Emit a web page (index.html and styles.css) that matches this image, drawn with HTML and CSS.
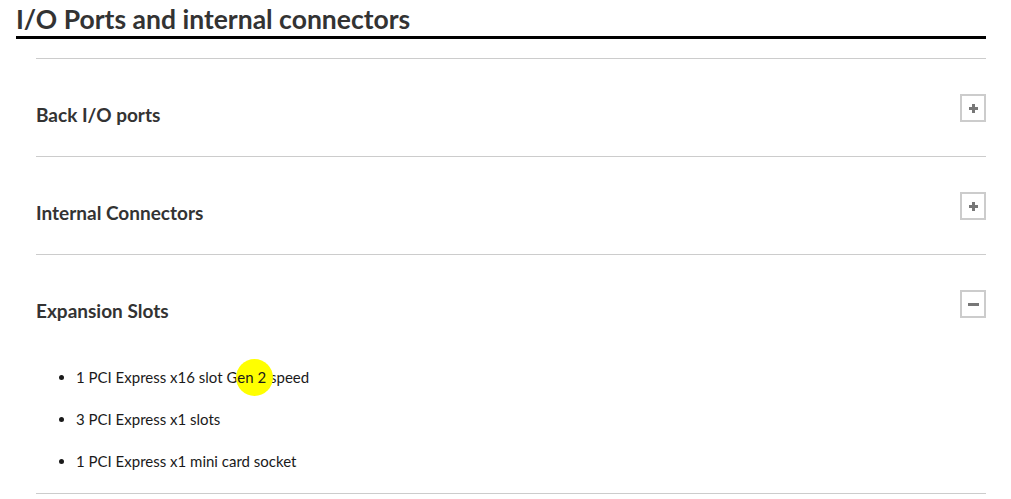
FILE: index.html
```html
<!DOCTYPE html>
<html>
<head>
<meta charset="utf-8">
<link rel="stylesheet" href="styles.css">
</head>
<body>
<div class="page">
  <h1 class="title">I/O Ports and internal connectors</h1>
  <div class="accordion">
    <section class="panel">
      <div class="panel-head">
        <h2 class="panel-title">Back I/O ports</h2>
        <span class="toggle plus"></span>
      </div>
    </section>
    <section class="panel">
      <div class="panel-head">
        <h2 class="panel-title">Internal Connectors</h2>
        <span class="toggle plus"></span>
      </div>
    </section>
    <section class="panel open">
      <div class="panel-head">
        <h2 class="panel-title">Expansion Slots</h2>
        <span class="toggle minus"></span>
      </div>
      <ul class="specs">
        <li>1 PCI Express x16 slot G<span class="hl">en 2</span> speed</li>
        <li>3 PCI Express x1 slots</li>
        <li>1 PCI Express x1 mini card socket</li>
      </ul>
    </section>
  </div>
</div>
</body>
</html>
```

FILE: styles.css
```css
html, body {
  margin: 0;
  padding: 0;
  background: #fff;
}
body {
  font-family: Lato, "Liberation Sans", sans-serif;
  color: #1a1a1a;
}
.page {
  padding: 0 25px 0 16px;
}
.title {
  margin: 0;
  padding-top: 3px;
  font-size: 26.5px;
  line-height: 32px;
  font-weight: bold;
  color: #333;
  border-bottom: 3px solid #000;
  height: 33px;
}
.accordion {
  margin: 19px 0 0 20px;
  border-bottom: 1px solid #ccc;
}
.panel {
  border-top: 1px solid #ccc;
  padding: 35px 0 34px;
}
.panel.open {
  padding-bottom: 0;
}
.panel-head {
  display: flex;
  justify-content: space-between;
  align-items: flex-start;
  height: 28px;
}
.panel-title {
  margin: 8px 0 0;
  font-size: 19px;
  line-height: 26px;
  font-weight: bold;
  color: #333;
}
.toggle {
  position: relative;
  box-sizing: border-box;
  width: 26px;
  height: 28px;
  border: 2px solid #ccc;
}
.toggle::before, .toggle::after {
  content: "";
  position: absolute;
  background: #777;
}
.toggle::before {
  left: 7px;
  top: 11px;
  width: 9px;
  height: 3px;
}
.plus::after {
  left: 10px;
  top: 8px;
  width: 3px;
  height: 9px;
}
.minus::before {
  left: 6px;
  top: 11px;
  width: 11px;
  height: 3px;
}
.minus::after {
  display: none;
}
.specs {
  margin: 49px 0 0;
  padding: 0 0 0 40px;
  list-style: disc;
}
.specs li {
  font-size: 15px;
  line-height: 20px;
  margin-bottom: 22px;
}
.specs li:last-child {
  margin-bottom: 22px;
}
.hl {
  position: relative;
  z-index: 0;
}
.hl::before {
  content: "";
  position: absolute;
  left: 50%;
  top: 50%;
  width: 37px;
  height: 37px;
  margin: -18px 0 0 -16px;
  border-radius: 50%;
  background: #ffff00;
  z-index: -1;
}
```
